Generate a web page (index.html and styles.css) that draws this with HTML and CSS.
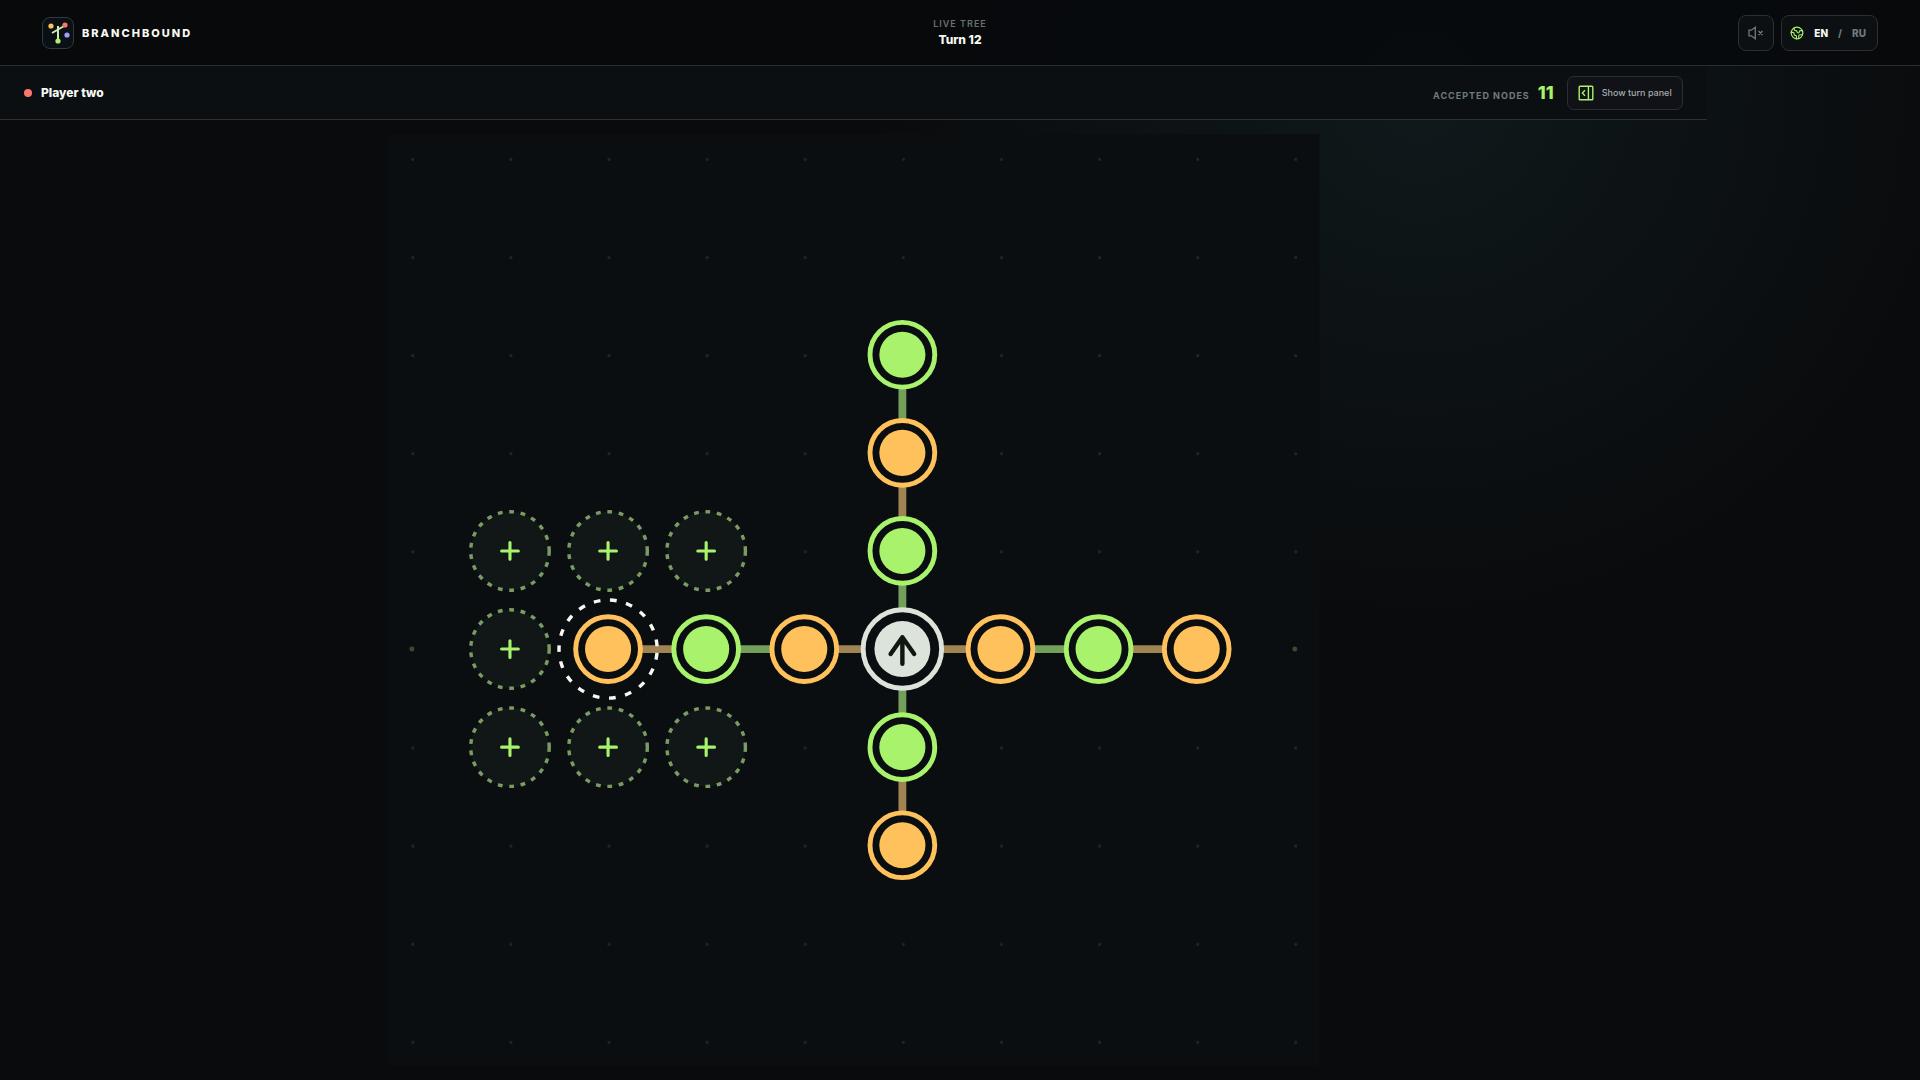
FILE: index.html
```html
<!DOCTYPE html>
<html lang="en">
<head>
<meta charset="utf-8">
<title>Branchbound</title>
<link rel="stylesheet" href="styles.css">
</head>
<body>
<header class="topbar">
  <a class="brand" href="#">
    <svg class="brand-mark" viewBox="0 0 32 32" aria-hidden="true">
      <rect x="0.5" y="0.5" width="31" height="31" rx="7.5" fill="#0a1013" stroke="#303a3e"/>
      <path d="M16 24V9M10 16l13-7.500" fill="none" stroke="#cbeeb0" stroke-width="2"/>
      <circle cx="9" cy="9" r="2.600" fill="#ffc15c"/>
      <circle cx="23" cy="8" r="2.600" fill="#ff766c"/>
      <circle cx="25" cy="18" r="2.600" fill="#a798ff"/>
      <circle cx="16" cy="24" r="2.600" fill="#a9f26b"/>
    </svg>
    <span>BRANCHBOUND</span>
  </a>
  <div class="turn">
    <span class="turn-label">LIVE TREE</span>
    <strong class="turn-value">Turn 12</strong>
  </div>
  <div class="tools">
    <button class="tool sound" type="button" aria-label="Sound off">
      <svg viewBox="0 0 16 16" fill="none" stroke="currentColor" stroke-width="1.300" aria-hidden="true">
        <path d="M1 5.200h2.300L7.300 2.200v11.600L3.300 10.800H1zM10.500 6l4 4M14.500 6l-4 4"/>
      </svg>
    </button>
    <button class="tool language" type="button" aria-label="Language">
      <svg viewBox="0 0 24 24" fill="none" stroke="currentColor" stroke-width="2" stroke-linecap="round" stroke-linejoin="round" aria-hidden="true">
        <path d="M21.540 15H17a2 2 0 0 0-2 2v4.540M7 3.340V5a3 3 0 0 0 3 3a2 2 0 0 1 2 2c0 1.100.9 2 2 2a2 2 0 0 0 2-2c0-1.100.9-2 2-2h3.170M11 21.950V18a2 2 0 0 0-2-2a2 2 0 0 1-2-2v-1a2 2 0 0 0-2-2H2.050"/>
        <circle cx="12" cy="12" r="10"/>
      </svg>
      <span class="lang-on">EN</span><span>/</span><span>RU</span>
    </button>
  </div>
</header>
<main class="layout">
  <section class="stage">
    <div class="statusbar">
      <h1 class="player">Player two</h1>
      <div class="summary">
        <p class="count">ACCEPTED NODES <strong>11</strong></p>
        <button class="panel-toggle" type="button">
          <svg viewBox="0 0 16 16" fill="none" stroke="currentColor" stroke-width="1.400" stroke-linejoin="round" aria-hidden="true">
            <path d="M2 1.200h12a.8.8 0 0 1 .8.8v12a.8.8 0 0 1-.8.800H2a.8.8 0 0 1-.8-.8V2a.8.8 0 0 1 .8-.8zM10.400 1.200v13.600M7 5.300L4.300 8 7 10.700"/>
          </svg>
          Show turn panel
        </button>
      </div>
    </div>
    <div class="board-wrap">
      <svg class="board" viewBox="0 0 950 950" role="img" aria-label="Game board">
        <defs>
          <pattern id="grid" width="100" height="100" patternUnits="userSpaceOnUse">
            <circle class="grid-dot" cx="26" cy="26" r="1.500"/>
          </pattern>
          <g id="node"><circle class="shell" r="33"/><circle class="core" r="23.500"/></g>
          <g id="move"><circle class="move-ring" r="40" pathLength="257"/><path class="move-plus" d="M-8.500 0h17M0-8.500v17"/></g>
        </defs>
        <rect class="board-bg" width="950" height="950"/>
        <rect width="950" height="950" fill="url(#grid)"/>
        <circle class="edge-dot" cx="25" cy="525" r="2.500"/>
        <circle class="edge-dot" cx="925" cy="525" r="2.500"/>
        <path class="link link-green" d="M525 525V425M525 325V225M525 525V625M425 525H325M625 525H725"/>
        <path class="link link-amber" d="M525 425V325M525 625V725M525 525H425M325 525H225M525 525H625M725 525H825"/>
        <use href="#move" x="125" y="425"/>
        <use href="#move" x="225" y="425"/>
        <use href="#move" x="325" y="425"/>
        <use href="#move" x="125" y="525"/>
        <use href="#move" x="125" y="625"/>
        <use href="#move" x="225" y="625"/>
        <use href="#move" x="325" y="625"/>
        <g class="green">
          <use href="#node" x="525" y="225"/>
          <use href="#node" x="525" y="425"/>
          <use href="#node" x="525" y="625"/>
          <use href="#node" x="325" y="525"/>
          <use href="#node" x="725" y="525"/>
        </g>
        <g class="amber">
          <use href="#node" x="525" y="325"/>
          <use href="#node" x="525" y="725"/>
          <use href="#node" x="225" y="525"/>
          <use href="#node" x="425" y="525"/>
          <use href="#node" x="625" y="525"/>
          <use href="#node" x="825" y="525"/>
        </g>
        <circle class="selected-ring" cx="225" cy="525" r="50" pathLength="320"/>
        <g class="root" transform="translate(525 525)">
          <circle class="shell" r="40"/>
          <circle class="core" r="28.500"/>
          <path class="arrow" d="M0 15V-12M-12 5L0-12 12 5"/>
        </g>
      </svg>
    </div>
  </section>
</main>
</body>
</html>
```
FILE: styles.css
```css
* { box-sizing: border-box; }

body {
  margin: 0;
  height: 100vh;
  display: flex;
  flex-direction: column;
  font-family: Inter, "Liberation Sans", sans-serif;
  color: #f7f8f2;
  background: radial-gradient(circle at 74% 8%, #0f191b 0, #0a0b0d 540px) #0a0b0d;
}

button { font: inherit; cursor: pointer; }

.topbar {
  display: grid;
  grid-template-columns: 1fr auto 1fr;
  align-items: center;
  height: 66px;
  flex: none;
  padding: 0 42px;
  background: rgba(7, 9, 11, 0.88);
  border-bottom: 1px solid #262e31;
}

.brand {
  display: flex;
  align-items: center;
  gap: 8px;
  color: inherit;
  text-decoration: none;
  font-size: 11px;
  font-weight: 800;
  letter-spacing: 2px;
}
.brand-mark { width: 32px; height: 32px; }

.turn { display: flex; flex-direction: column; align-items: center; gap: 2px; }
.turn-label { font-size: 9px; line-height: 12px; font-weight: 600; letter-spacing: 1px; color: #687172; }
.turn-value { font-size: 12px; line-height: 16px; font-weight: 800; }

.tools { display: flex; justify-content: flex-end; gap: 7px; }
.tool {
  display: flex;
  align-items: center;
  justify-content: center;
  height: 36px;
  padding: 0;
  color: #717a7c;
  background: #0c1013;
  border: 1px solid #292f33;
  border-radius: 8px;
}
.sound { width: 36px; }
.sound svg { width: 16px; height: 16px; }
.language { gap: 10px; padding: 0 11px 0 8px; font-size: 10px; font-weight: 800; }
.language svg { width: 14px; height: 14px; color: #a9f26b; }
.lang-on { color: #f7f8f2; }

.layout { flex: 1; min-height: 0; display: grid; grid-template-columns: 8fr 1fr; }
.stage { display: flex; flex-direction: column; min-width: 0; min-height: 0; }

.statusbar {
  display: flex;
  align-items: center;
  justify-content: space-between;
  flex: none;
  height: 54px;
  padding: 0 24px;
  background: #0b0f12;
  border-bottom: 1px solid #2a3235;
}
.player { display: flex; align-items: center; gap: 9px; margin: 0; font-size: 12px; font-weight: 800; }
.player::before { content: ""; width: 8px; height: 8px; border-radius: 50%; background: #ff766c; }
.summary { display: flex; align-items: center; gap: 13px; }
.count {
  display: flex;
  align-items: baseline;
  gap: 8px;
  margin: 0;
  font-size: 9px;
  font-weight: 700;
  letter-spacing: 1px;
  color: #727b7c;
}
.count strong { font-size: 18px; font-weight: 800; letter-spacing: 0; color: #a9f26b; }
.panel-toggle {
  display: flex;
  align-items: center;
  gap: 8px;
  height: 34px;
  padding: 0 10px;
  font-size: 9px;
  font-weight: 500;
  color: #a6adad;
  background: #101217;
  border: 1px solid #2a2f34;
  border-radius: 7px;
}
.panel-toggle svg { width: 16px; height: 16px; color: #a9f26b; }

.board-wrap { flex: 1; min-height: 0; padding: 14px; }
.board { display: block; width: 100%; height: 100%; }

.board-bg { fill: #0a0e11; }
.grid-dot { fill: #22292b; }
.edge-dot { fill: #3a4c36; }
.link { fill: none; stroke-width: 8; }
.link-green { stroke: #739f5b; }
.link-amber { stroke: #9f8353; }
.shell { fill: #0a0e11; stroke: currentColor; stroke-width: 5; }
.core { fill: currentColor; }
.green { color: #a9f26b; }
.amber { color: #ffc15c; }
.root { color: #dce3da; }
.arrow { fill: none; stroke: #101713; stroke-width: 4.5; stroke-linecap: round; stroke-linejoin: round; }
.move-ring { fill: #101716; stroke: #7a9c62; stroke-width: 3.5; stroke-dasharray: 5 7; }
.move-plus { fill: none; stroke: #a9f26b; stroke-width: 3.2; stroke-linecap: round; }
.selected-ring { fill: none; stroke: #f7f8f2; stroke-width: 3.5; stroke-dasharray: 7 10; stroke-dashoffset: -4; }
```
